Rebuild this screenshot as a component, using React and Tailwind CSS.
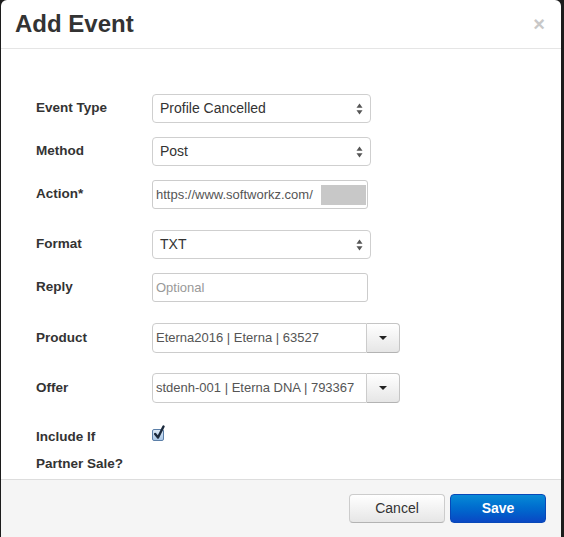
import React from "react";

const font = { fontFamily: '"Liberation Sans", Arial, sans-serif' };

// up/down arrows of a mac style select
const SelectArrows = () => (
  <svg width="7" height="12" viewBox="0 0 7 12" className="absolute right-[7px] top-1/2 -translate-y-1/2">
    <path d="M3.5 0.5 L6.5 4.8 L0.5 4.8 Z" fill="#555" />
    <path d="M3.5 11.5 L6.5 7.2 L0.5 7.2 Z" fill="#555" />
  </svg>
);

const Select = ({ value }) => (
  <div className="relative flex h-[29px] w-[219px] items-center rounded-[4px] border border-[#cfcfcf] bg-white pl-[7px] text-[14px] text-[#333]">
    {value}
    <SelectArrows />
  </div>
);

const Combo = ({ value }) => (
  <div className="flex h-[30px] w-[248px]">
    <div className="flex flex-1 items-center rounded-l-[4px] border border-[#ccc] bg-white pl-[3px] text-[13px] text-[#555]">
      {value}
    </div>
    <div className="flex w-[33px] items-center justify-center rounded-r-[4px] border border-l-0 border-[#c5c5c5] border-b-[#b3b3b3] bg-gradient-to-b from-white to-[#e6e6e6]">
      <svg width="8" height="4" viewBox="0 0 8 4">
        <path d="M0 0 L8 0 L4 4 Z" fill="#222" />
      </svg>
    </div>
  </div>
);

const Row = ({ label, className, children }) => (
  <div className={"flex items-center " + (className || "")}>
    <div className="w-[116px] text-[13.5px] font-bold text-[#333]">{label}</div>
    {children}
  </div>
);

const App = () => {
  return (
    <div className="h-[537px] w-[564px] overflow-hidden bg-[#1c1c1c] pl-px pr-[3px]" style={font}>
      <div className="flex h-full flex-col rounded-t-[6px] bg-white">
        {/* Header */}
        <div className="flex h-[49px] items-center justify-between border-b border-[#e5e5e5] pl-[14px] pr-[16px]">
          <h3 className="text-[24px] font-bold text-[#333]">Add Event</h3>
          <span className="text-[20px] font-bold leading-none text-[#c8c8c8]">×</span>
        </div>

        {/* Body */}
        <div className="flex flex-1 flex-col overflow-hidden pl-[35px] pt-[45px]">
          <Row label="Event Type">
            <Select value="Profile Cancelled" />
          </Row>
          <Row label="Method" className="mt-[14px]">
            <Select value="Post" />
          </Row>
          <Row label="Action*" className="mt-[14px]">
            <div className="flex h-[29px] w-[216px] items-center rounded-[3px] border border-[#ccc] bg-white pl-[3px] pr-[1px] text-[13px] text-[#555]">
              <span className="whitespace-nowrap">https://www.softworkz.com/</span>
              <div className="ml-auto h-[20px] w-[45px] bg-[#c8c8c8]" />
            </div>
          </Row>
          <Row label="Format" className="mt-[21px]">
            <Select value="TXT" />
          </Row>
          <Row label="Reply" className="mt-[14px]">
            <input
              type="text"
              placeholder="Optional"
              className="h-[29px] w-[216px] rounded-[3px] border border-[#ccc] bg-white pl-[3px] text-[13px] text-[#555] outline-none placeholder:text-[#999]"
            />
          </Row>
          <Row label="Product" className="mt-[21px]">
            <Combo value="Eterna2016 | Eterna | 63527" />
          </Row>
          <Row label="Offer" className="mt-[20px]">
            <Combo value="stdenh-001 | Eterna DNA | 793367" />
          </Row>
          <div className="mt-[20px] flex items-start">
            <div className="w-[116px] text-[13.5px] font-bold leading-[27px] text-[#333]">
              <div>Include If</div>
              <div>Partner Sale?</div>
            </div>
            <div className="relative mt-[6px] h-[12px] w-[12px] rounded-[2px] border border-[#5b7fa8] bg-gradient-to-b from-[#dbe9f7] to-[#a9c6e6]">
              <svg width="13" height="15" viewBox="0 0 13 15" className="absolute left-[0px] -top-[5px]">
                <path d="M2.2 9 L5 12.5 L10.5 1.5" stroke="#1b2a3d" strokeWidth="2.4" fill="none" strokeLinecap="round" strokeLinejoin="round" />
              </svg>
            </div>
          </div>
        </div>

        {/* Footer */}
        <div className="flex h-[58px] items-start justify-end gap-[5px] border-t border-[#ddd] bg-[#f5f5f5] pr-[15px] pt-[14px]">
          <button className="h-[29px] w-[96px] rounded-[4px] border border-[#ccc] border-b-[#b3b3b3] bg-gradient-to-b from-white to-[#e6e6e6] text-[14px] text-[#333]">
            Cancel
          </button>
          <button className="h-[29px] w-[96px] rounded-[4px] border border-[#0848b8] bg-gradient-to-b from-[#0a8ad6] to-[#0b47c4] text-[14px] font-bold text-white">
            Save
          </button>
        </div>
      </div>
    </div>
  );
};

export default App;
